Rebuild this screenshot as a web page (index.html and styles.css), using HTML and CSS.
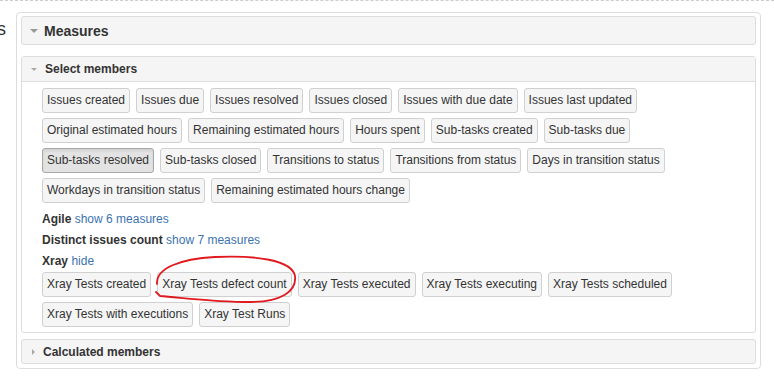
FILE: index.html
```html
<!DOCTYPE html>
<html lang="en">

<head>
    <meta charset="UTF-8">
    <meta name="viewport" content="width=device-width, initial-scale=1.0">
    <title>Measures</title>
    <link rel="stylesheet" href="styles.css">
</head>

<body>
    <div class="page">
        <div class="side-label"><span>Measures</span></div>

        <div class="outer">
            <div class="section-head big">
                <span class="caret-down"></span>
                <span>Measures</span>
            </div>

            <div class="panel">
                <div class="section-head">
                    <span class="caret-down small"></span>
                    <span>Select members</span>
                </div>
                <div class="panel-body">
                    <div class="members">
                        <button class="member">Issues created</button>
                        <button class="member">Issues due</button>
                        <button class="member">Issues resolved</button>
                        <button class="member">Issues closed</button>
                        <button class="member">Issues with due date</button>
                        <button class="member">Issues last updated</button>
                        <button class="member">Original estimated hours</button>
                        <button class="member">Remaining estimated hours</button>
                        <button class="member">Hours spent</button>
                        <button class="member">Sub-tasks created</button>
                        <button class="member">Sub-tasks due</button>
                        <button class="member active">Sub-tasks resolved</button>
                        <button class="member">Sub-tasks closed</button>
                        <button class="member">Transitions to status</button>
                        <button class="member">Transitions from status</button>
                        <button class="member">Days in transition status</button>
                        <button class="member">Workdays in transition status</button>
                        <button class="member">Remaining estimated hours change</button>
                    </div>

                    <div class="group"><b>Agile</b> <a href="#">show 6 measures</a></div>
                    <div class="group"><b>Distinct issues count</b> <a href="#">show 7 measures</a></div>
                    <div class="group"><b>Xray</b> <a href="#">hide</a></div>

                    <div class="members">
                        <button class="member">Xray Tests created</button>
                        <button class="member">Xray Tests defect count</button>
                        <button class="member">Xray Tests executed</button>
                        <button class="member">Xray Tests executing</button>
                        <button class="member">Xray Tests scheduled</button>
                        <button class="member">Xray Tests with executions</button>
                        <button class="member">Xray Test Runs</button>
                    </div>
                </div>
            </div>

            <div class="section-head closed">
                <span class="caret-right"></span>
                <span>Calculated members</span>
            </div>
        </div>
    </div>

    <!-- hand-drawn mark over the defect count button -->
    <svg class="scribble" width="150" height="56" viewBox="0 0 150 56">
        <path d="M7,32 C6,16 30,7 65,5 C105,3 142,8 145,24 C147,40 130,50 100,50 C65,50 35,46 10,44 L6,40"
            fill="none" stroke="#e0191e" stroke-width="1.8" stroke-linecap="round" />
    </svg>
</body>

</html>
```

FILE: styles.css
```css
body {
    font-family: "Liberation Sans", Arial, sans-serif;
    font-size: 12px;
    color: #333;
    margin: 0;
    position: relative;
}

.page {
    display: flex;
    border-top: 1px dashed #ccc;
    padding-top: 11px;
}

.side-label {
    width: 6px;
    margin-right: 10px;
    display: flex;
    justify-content: flex-end;
    overflow: hidden;
    font-size: 18px;
    line-height: 34px;
    color: #333;
    white-space: nowrap;
}

.outer {
    width: 735px;
    border: 1px solid #ddd;
    border-radius: 4px;
    padding: 3px 4px 4px 4px;
    background: #fff;
}

.section-head {
    display: flex;
    align-items: center;
    height: 24px;
    background-color: #f5f5f5;
    font-weight: bold;
    font-size: 12px;
    padding-left: 8px;
}

.section-head.big {
    height: 27px;
    font-size: 14px;
    border: 1px solid #ddd;
    border-radius: 3px;
}

.section-head.closed {
    height: 23px;
    margin-top: 6px;
    border: 1px solid #ddd;
    border-radius: 3px;
    padding-left: 10px;
}

.caret-down {
    width: 0;
    height: 0;
    border-left: 4px solid transparent;
    border-right: 4px solid transparent;
    border-top: 4px solid #999;
    margin-right: 6px;
}

.caret-down.small {
    border-left-width: 3px;
    border-right-width: 3px;
    border-top-width: 3px;
    border-top-color: #aaa;
    margin-left: 1px;
    margin-right: 8px;
}

.caret-right {
    width: 0;
    height: 0;
    border-top: 3px solid transparent;
    border-bottom: 3px solid transparent;
    border-left: 3px solid #aaa;
    margin-right: 8px;
}

.panel {
    margin-top: 11px;
    border: 1px solid #ddd;
    border-radius: 3px;
}

.panel .section-head {
    border-bottom: 1px solid #ddd;
}

.panel-body {
    padding: 6px 20px 5px 20px;
}

.members {
    display: flex;
    flex-wrap: wrap;
    gap: 5px 6px;
}

.member {
    font-family: inherit;
    font-size: 12px;
    line-height: 17px;
    color: #333;
    background-color: #f5f5f5;
    border: 1px solid #d0d0d0;
    border-radius: 3px;
    padding: 3px 4px;
    margin: 0;
    cursor: pointer;
}

.member.active {
    background-color: #e3e3e3;
    border-color: #a8a8a8;
    box-shadow: inset 0 2px 3px rgba(0, 0, 0, 0.08);
}

.group {
    line-height: 21px;
}

.members + .group {
    margin-top: 6px;
}

.group a {
    color: #3b73af;
    text-decoration: none;
}

.scribble {
    position: absolute;
    left: 150px;
    top: 252px;
}
```
